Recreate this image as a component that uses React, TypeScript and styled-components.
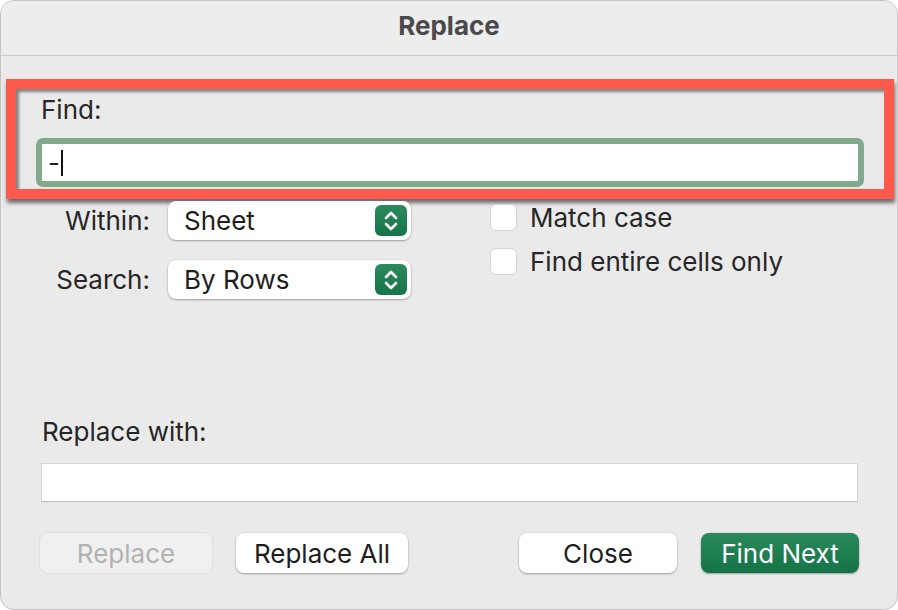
import * as React from 'react';
import styled, { createGlobalStyle } from 'styled-components';

const GlobalStyles = createGlobalStyle`
  html, body {
    margin: 0;
    padding: 0;
    background: #ffffff;
  }

  body {
    font-family: 'Inter', 'Liberation Sans', sans-serif;
  }

  *, *:before, *:after {
    box-sizing: border-box;
  }
`;

const Window = styled.div`
  display: flex;
  flex-direction: column;
  width: 898px;
  height: 610px;
  background: #eaeaea;
  border: 1px solid #c4c4c4;
  border-radius: 14px;
  overflow: hidden;
  color: #262626;
  font-size: 26px;
`;

const TitleBar = styled.div`
  display: flex;
  justify-content: center;
  align-items: center;
  height: 55px;
  flex-shrink: 0;
  background: #ededed;
  border-bottom: 1px solid #cbcbcb;
  font-size: 26px;
  font-weight: 700;
  color: #4a4a4a;
  padding-bottom: 6px;
`;

const FindBox = styled.div`
  margin: 23px 3px 0 5px;
  border: 10px solid #fd5a4c;
  padding: 6px 20px 2px 20px;
  box-shadow: 1px 4px 4px rgba(0, 0, 0, 0.55), inset 3px 3px 3px rgba(0, 0, 0, 0.45);
`;

const Label = styled.div`
  line-height: 30px;
  height: 30px;
  padding-left: 5px;
`;

const FocusField = styled.div`
  display: flex;
  align-items: center;
  margin-top: 13px;
  height: 49px;
  border: 6px solid #80aa8b;
  border-radius: 7px;
  background: #ffffff;
  padding-left: 6px;
  color: #1e1e1e;
`;

const Caret = styled.span`
  display: inline-block;
  width: 2px;
  height: 26px;
  margin-left: 1px;
  background: #111111;
`;

const Options = styled.div`
  display: flex;
  margin-top: 2px;
  padding-left: 53px;
`;

const SelectGrid = styled.div`
  display: grid;
  grid-template-columns: 96px 243px;
  column-gap: 18px;
  row-gap: 20px;
  align-items: center;
`;

const FieldName = styled.div`
  text-align: right;
  white-space: nowrap;
`;

const SelectBox = styled.div`
  display: flex;
  align-items: center;
  justify-content: space-between;
  height: 39px;
  padding: 0 4px 0 16px;
  background: #ffffff;
  border-radius: 8px;
  box-shadow: 0 1px 2px rgba(0, 0, 0, 0.3), 0 0 0 0.5px rgba(0, 0, 0, 0.08);
  color: #1e1e1e;
`;

const Stepper = styled.div`
  display: flex;
  align-items: center;
  justify-content: center;
  width: 32px;
  height: 31px;
  border-radius: 6px;
  background: linear-gradient(#2c8a5d, #157548);
`;

const Checks = styled.div`
  display: flex;
  flex-direction: column;
  gap: 17px;
  margin-left: 79px;
  padding-top: 3px;
`;

const CheckRow = styled.label`
  display: flex;
  align-items: center;
  gap: 13px;
  height: 27px;
  white-space: nowrap;
`;

const CheckBox = styled.span`
  display: inline-block;
  flex-shrink: 0;
  width: 27px;
  height: 27px;
  background: #ffffff;
  border: 1px solid #d4d4d4;
  border-radius: 6px;
`;

const Spacer = styled.div`
  flex: 1;
`;

const ReplaceSection = styled.div`
  padding: 0 39px 0 40px;
`;

const ReplaceLabel = styled(Label)`
  padding-left: 1px;
`;

const PlainField = styled.div`
  margin-top: 16px;
  height: 39px;
  background: #ffffff;
  border: 1px solid #d6d6d6;
  border-bottom-color: #bdbdbd;
`;

const ButtonRow = styled.div`
  display: flex;
  align-items: center;
  padding: 31px 38px 36px 39px;
`;

const ButtonGroup = styled.div`
  display: flex;
  gap: 24px;
`;

const Button = styled.div<{ $width: number; $variant?: 'disabled' | 'primary' }>`
  display: flex;
  justify-content: center;
  align-items: center;
  width: ${({ $width }) => $width}px;
  height: 40px;
  border-radius: 8px;
  font-size: 26px;
  background: ${({ $variant }) =>
    $variant === 'primary'
      ? 'linear-gradient(#2b8a5c, #137347)'
      : $variant === 'disabled'
      ? '#f0f0f0'
      : '#ffffff'};
  color: ${({ $variant }) =>
    $variant === 'primary' ? '#ffffff' : $variant === 'disabled' ? '#b2b2b2' : '#1e1e1e'};
  box-shadow: ${({ $variant }) =>
    $variant === 'disabled'
      ? '0 0 0 1px rgba(0, 0, 0, 0.05)'
      : '0 1px 2px rgba(0, 0, 0, 0.3), 0 0 0 0.5px rgba(0, 0, 0, 0.08)'};
`;

const StepperIcon = () => (
  <svg width="16" height="22" viewBox="0 0 16 22" fill="none">
    <path d="M3 8 L8 3 L13 8" stroke="#ffffff" strokeWidth="2.6" strokeLinecap="round" strokeLinejoin="round" />
    <path d="M3 14 L8 19 L13 14" stroke="#ffffff" strokeWidth="2.6" strokeLinecap="round" strokeLinejoin="round" />
  </svg>
);

const Select = ({ value }: { value: string }) => (
  <SelectBox>
    <span>{value}</span>
    <Stepper>
      <StepperIcon />
    </Stepper>
  </SelectBox>
);

export default function App() {
  return (
    <React.Fragment>
      <GlobalStyles />
      <Window>
        <TitleBar>Replace</TitleBar>
        <FindBox>
          <Label>Find:</Label>
          <FocusField>
            <span>-</span>
            <Caret />
          </FocusField>
        </FindBox>
        <Options>
          <SelectGrid>
            <FieldName>Within:</FieldName>
            <Select value="Sheet" />
            <FieldName>Search:</FieldName>
            <Select value="By Rows" />
          </SelectGrid>
          <Checks>
            <CheckRow>
              <CheckBox />
              Match case
            </CheckRow>
            <CheckRow>
              <CheckBox />
              Find entire cells only
            </CheckRow>
          </Checks>
        </Options>
        <Spacer />
        <ReplaceSection>
          <ReplaceLabel>Replace with:</ReplaceLabel>
          <PlainField />
        </ReplaceSection>
        <ButtonRow>
          <ButtonGroup>
            <Button $width={172} $variant="disabled">Replace</Button>
            <Button $width={172}>Replace All</Button>
          </ButtonGroup>
          <Spacer />
          <ButtonGroup>
            <Button $width={158}>Close</Button>
            <Button $width={158} $variant="primary">Find Next</Button>
          </ButtonGroup>
        </ButtonRow>
      </Window>
    </React.Fragment>
  );
}
